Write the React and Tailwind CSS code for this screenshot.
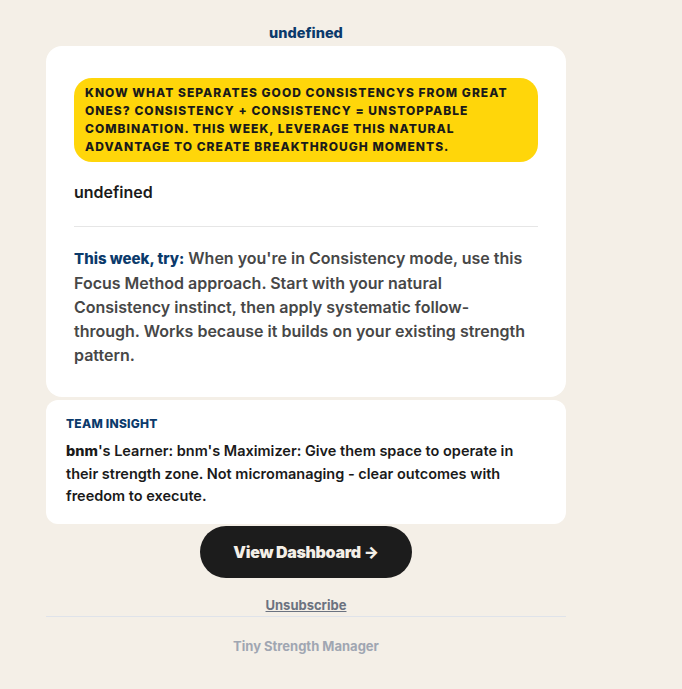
import React from 'react';

const App = () => {
  return (
    <div className="min-h-[689px] w-full bg-[#f4efe7] font-['Inter',sans-serif]">
      <div className="ml-[46px] w-[520px] pt-[24px] pb-[30px]">
        <div className="text-center text-[14.5px] font-extrabold leading-[18px] text-[#0b3a6b]">undefined</div>

        <div className="mt-[4px] rounded-[16px] bg-white px-[28px] pt-[32px] pb-[30px]">
          <div className="rounded-[18px] bg-[#ffd60a] px-[11px] py-[6px] text-[12px] font-extrabold uppercase leading-[18px] tracking-[0.085em] text-[#1a1a1a]">
            Know what separates good Consistencys from great ones? Consistency + Consistency = unstoppable combination. This week, leverage this natural advantage to create breakthrough moments.
          </div>
          <div className="mt-[19px] text-[16px] font-semibold leading-[22px] text-[#1a1a1a]">undefined</div>
          <div className="mt-[23px] border-t border-[#e6e6e6]" />
          <p className="mt-[19px] text-[16px] font-semibold leading-[24px] text-[#474747]">
            <span className="text-[15px] font-extrabold text-[#0b3a6b]">This week, try:</span> When you're in Consistency mode, use this<br />
            Focus Method approach. Start with your natural<br />
            Consistency instinct, then apply systematic follow-<br />
            through. Works because it builds on your existing strength<br />
            pattern.
          </p>
        </div>

        <div className="mt-[3px] rounded-[12px] bg-white px-[20px] pt-[16px] pb-[16px]">
          <div className="text-[12px] font-extrabold uppercase leading-[16px] tracking-[0.02em] text-[#0b3a6b]">Team Insight</div>
          <p className="mt-[8px] text-[14.5px] font-semibold leading-[22.5px] text-[#1a1a1a]">
            <span className="font-extrabold">bnm</span>'s Learner: bnm's Maximizer: Give them space to operate in their strength zone. Not micromanaging - clear outcomes with freedom to execute.
          </p>
        </div>

        <div className="flex justify-center">
          <a className="mt-[2px] flex h-[52px] w-[212px] items-center justify-center rounded-full bg-[#1c1c1c] text-[16px] font-black tracking-[-0.02em] text-[#f4efe7]">
            View Dashboard →
          </a>
        </div>

        <div className="mt-[14px] text-center">
          <a className="text-[13px] font-bold leading-[16px] text-[#6b7280] underline">Unsubscribe</a>
        </div>
        <div className="border-t border-[#dfe3ea]" />
        <div className="mt-[21px] text-center text-[13px] font-bold leading-[16px] text-[#a0a6b2]">Tiny Strength Manager</div>
      </div>
    </div>
  );
};

export default App;
